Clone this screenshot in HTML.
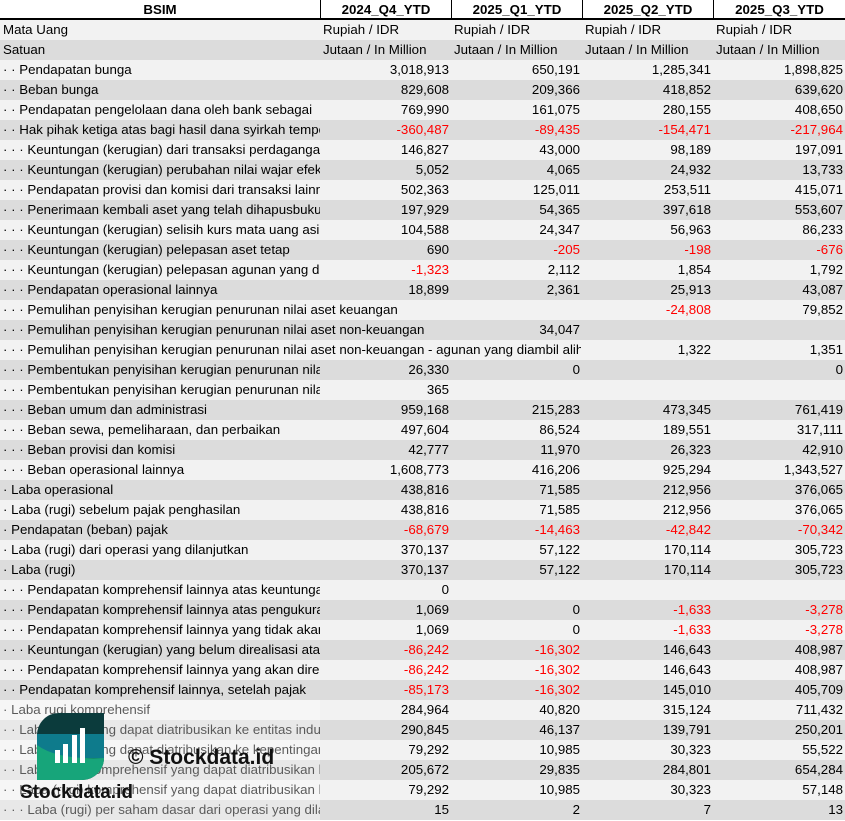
<!DOCTYPE html>
<html><head><meta charset="utf-8"><style>
*{margin:0;padding:0;box-sizing:border-box}
body{width:845px;height:821px;overflow:hidden;background:#fff;font-family:"Liberation Sans",sans-serif;font-size:13.3px;color:#000;position:relative}
.r{position:absolute;left:0;width:845px;height:20px;line-height:20px;white-space:nowrap}
.r div{position:absolute;top:0;height:20px;overflow:hidden}
.l{left:3px;width:317px}
.c1{left:320px;width:129px}.c2{left:451px;width:129px}.c3{left:582px;width:129px}.c4{left:713px;width:130px}
.n{text-align:right}
.u{text-align:left;padding-left:3px}
.a{background:#f2f2f2}.b{background:#dcdcdc}
.neg{color:#f00}
.h{font-weight:bold;text-align:center;border-bottom:2px solid #000;background:#fff}
.h div{height:18px;line-height:19px;text-align:center;border-left:1px solid #000}
</style></head><body>
<div class="r h" style="top:0"><div style="left:0;width:320px;border-left:none">BSIM</div><div class="c1" style="width:131px">2024_Q4_YTD</div><div class="c2" style="width:131px">2025_Q1_YTD</div><div class="c3" style="width:131px">2025_Q2_YTD</div><div class="c4" style="width:132px">2025_Q3_YTD</div></div>
<div id="rows"></div>
<script>
const d=[
["Mata Uang","Rupiah / IDR","Rupiah / IDR","Rupiah / IDR","Rupiah / IDR",1],
["Satuan","Jutaan / In Million","Jutaan / In Million","Jutaan / In Million","Jutaan / In Million",1],
["· · Pendapatan bunga","3,018,913","650,191","1,285,341","1,898,825"],
["· · Beban bunga","829,608","209,366","418,852","639,620"],
["· · Pendapatan pengelolaan dana oleh bank sebagai","769,990","161,075","280,155","408,650"],
["· · Hak pihak ketiga atas bagi hasil dana syirkah temporer","-360,487","-89,435","-154,471","-217,964"],
["· · · Keuntungan (kerugian) dari transaksi perdagangan","146,827","43,000","98,189","197,091"],
["· · · Keuntungan (kerugian) perubahan nilai wajar efek","5,052","4,065","24,932","13,733"],
["· · · Pendapatan provisi dan komisi dari transaksi lainnya","502,363","125,011","253,511","415,071"],
["· · · Penerimaan kembali aset yang telah dihapusbukukan","197,929","54,365","397,618","553,607"],
["· · · Keuntungan (kerugian) selisih kurs mata uang asing","104,588","24,347","56,963","86,233"],
["· · · Keuntungan (kerugian) pelepasan aset tetap","690","-205","-198","-676"],
["· · · Keuntungan (kerugian) pelepasan agunan yang diambil","-1,323","2,112","1,854","1,792"],
["· · · Pendapatan operasional lainnya","18,899","2,361","25,913","43,087"],
["· · · Pemulihan penyisihan kerugian penurunan nilai aset keuangan","","","-24,808","79,852",0,450],
["· · · Pemulihan penyisihan kerugian penurunan nilai aset non-keuangan","","34,047","","",0,450],
["· · · Pemulihan penyisihan kerugian penurunan nilai aset non-keuangan - agunan yang diambil alih","","","1,322","1,351",0,578],
["· · · Pembentukan penyisihan kerugian penurunan nilai","26,330","0","","0"],
["· · · Pembentukan penyisihan kerugian penurunan nilai","365","","",""],
["· · · Beban umum dan administrasi","959,168","215,283","473,345","761,419"],
["· · · Beban sewa, pemeliharaan, dan perbaikan","497,604","86,524","189,551","317,111"],
["· · · Beban provisi dan komisi","42,777","11,970","26,323","42,910"],
["· · · Beban operasional lainnya","1,608,773","416,206","925,294","1,343,527"],
["· Laba operasional","438,816","71,585","212,956","376,065"],
["· Laba (rugi) sebelum pajak penghasilan","438,816","71,585","212,956","376,065"],
["· Pendapatan (beban) pajak","-68,679","-14,463","-42,842","-70,342"],
["· Laba (rugi) dari operasi yang dilanjutkan","370,137","57,122","170,114","305,723"],
["· Laba (rugi)","370,137","57,122","170,114","305,723"],
["· · · Pendapatan komprehensif lainnya atas keuntungan","0","","",""],
["· · · Pendapatan komprehensif lainnya atas pengukuran","1,069","0","-1,633","-3,278"],
["· · · Pendapatan komprehensif lainnya yang tidak akan","1,069","0","-1,633","-3,278"],
["· · · Keuntungan (kerugian) yang belum direalisasi atas","-86,242","-16,302","146,643","408,987"],
["· · · Pendapatan komprehensif lainnya yang akan direklas","-86,242","-16,302","146,643","408,987"],
["· · Pendapatan komprehensif lainnya, setelah pajak","-85,173","-16,302","145,010","405,709"],
["· Laba rugi komprehensif","284,964","40,820","315,124","711,432"],
["· · Laba (rugi) yang dapat diatribusikan ke entitas induk","290,845","46,137","139,791","250,201"],
["· · Laba (rugi) yang dapat diatribusikan ke kepentingan","79,292","10,985","30,323","55,522"],
["· · Laba (rugi) komprehensif yang dapat diatribusikan ke","205,672","29,835","284,801","654,284"],
["· · Laba (rugi) komprehensif yang dapat diatribusikan ke","79,292","10,985","30,323","57,148"],
["· · · Laba (rugi) per saham dasar dari operasi yang dilanjutkan","15","2","7","13"]];
let h="";
d.forEach((r,i)=>{const y=20+i*20;const cls=i%2?"b":"a";const w=r[6]||317;
h+=`<div class="r ${cls}" style="top:${y}px"><div class="l" style="width:${w}px">${r[0]}</div>`;
for(let k=1;k<=4;k++){const v=r[k];const neg=v.startsWith("-")?" neg":"";h+=`<div class="c${k} ${r[5]?'u':'n'}${neg}">${v}</div>`;}
h+="</div>";});
document.getElementById("rows").innerHTML=h;
</script>
<div style="position:absolute;left:0;top:700px;width:320px;height:121px;background:rgba(255,255,255,0.35)"></div>
<svg style="position:absolute;left:37px;top:713px" width="67" height="67" viewBox="0 0 67 67">
<defs><clipPath id="cp"><path d="M22 0H67V45A22 22 0 0 1 45 67H0V22A22 22 0 0 1 22 0Z"/></clipPath></defs>
<g clip-path="url(#cp)"><rect width="67" height="67" fill="#0b3b3c"/><path d="M0 21H67V45H0Z" fill="#0e7b8c"/><path d="M0 32Q20 47 67 45V67H0Z" fill="#17a57a"/></g>
<rect x="18" y="37" width="5" height="13" fill="#fff"/><rect x="26" y="31" width="5" height="19" fill="#fff"/><rect x="35" y="22" width="5" height="28" fill="#fff"/><rect x="43" y="15" width="5" height="35" fill="#fff"/>
</svg>
<div style="position:absolute;left:20px;top:782px;font-weight:bold;font-size:19px;color:#111">Stockdata.id</div>
<div style="position:absolute;left:128px;top:746px;font-weight:bold;font-size:21px;color:#111">© Stockdata.id</div>
</body></html>
